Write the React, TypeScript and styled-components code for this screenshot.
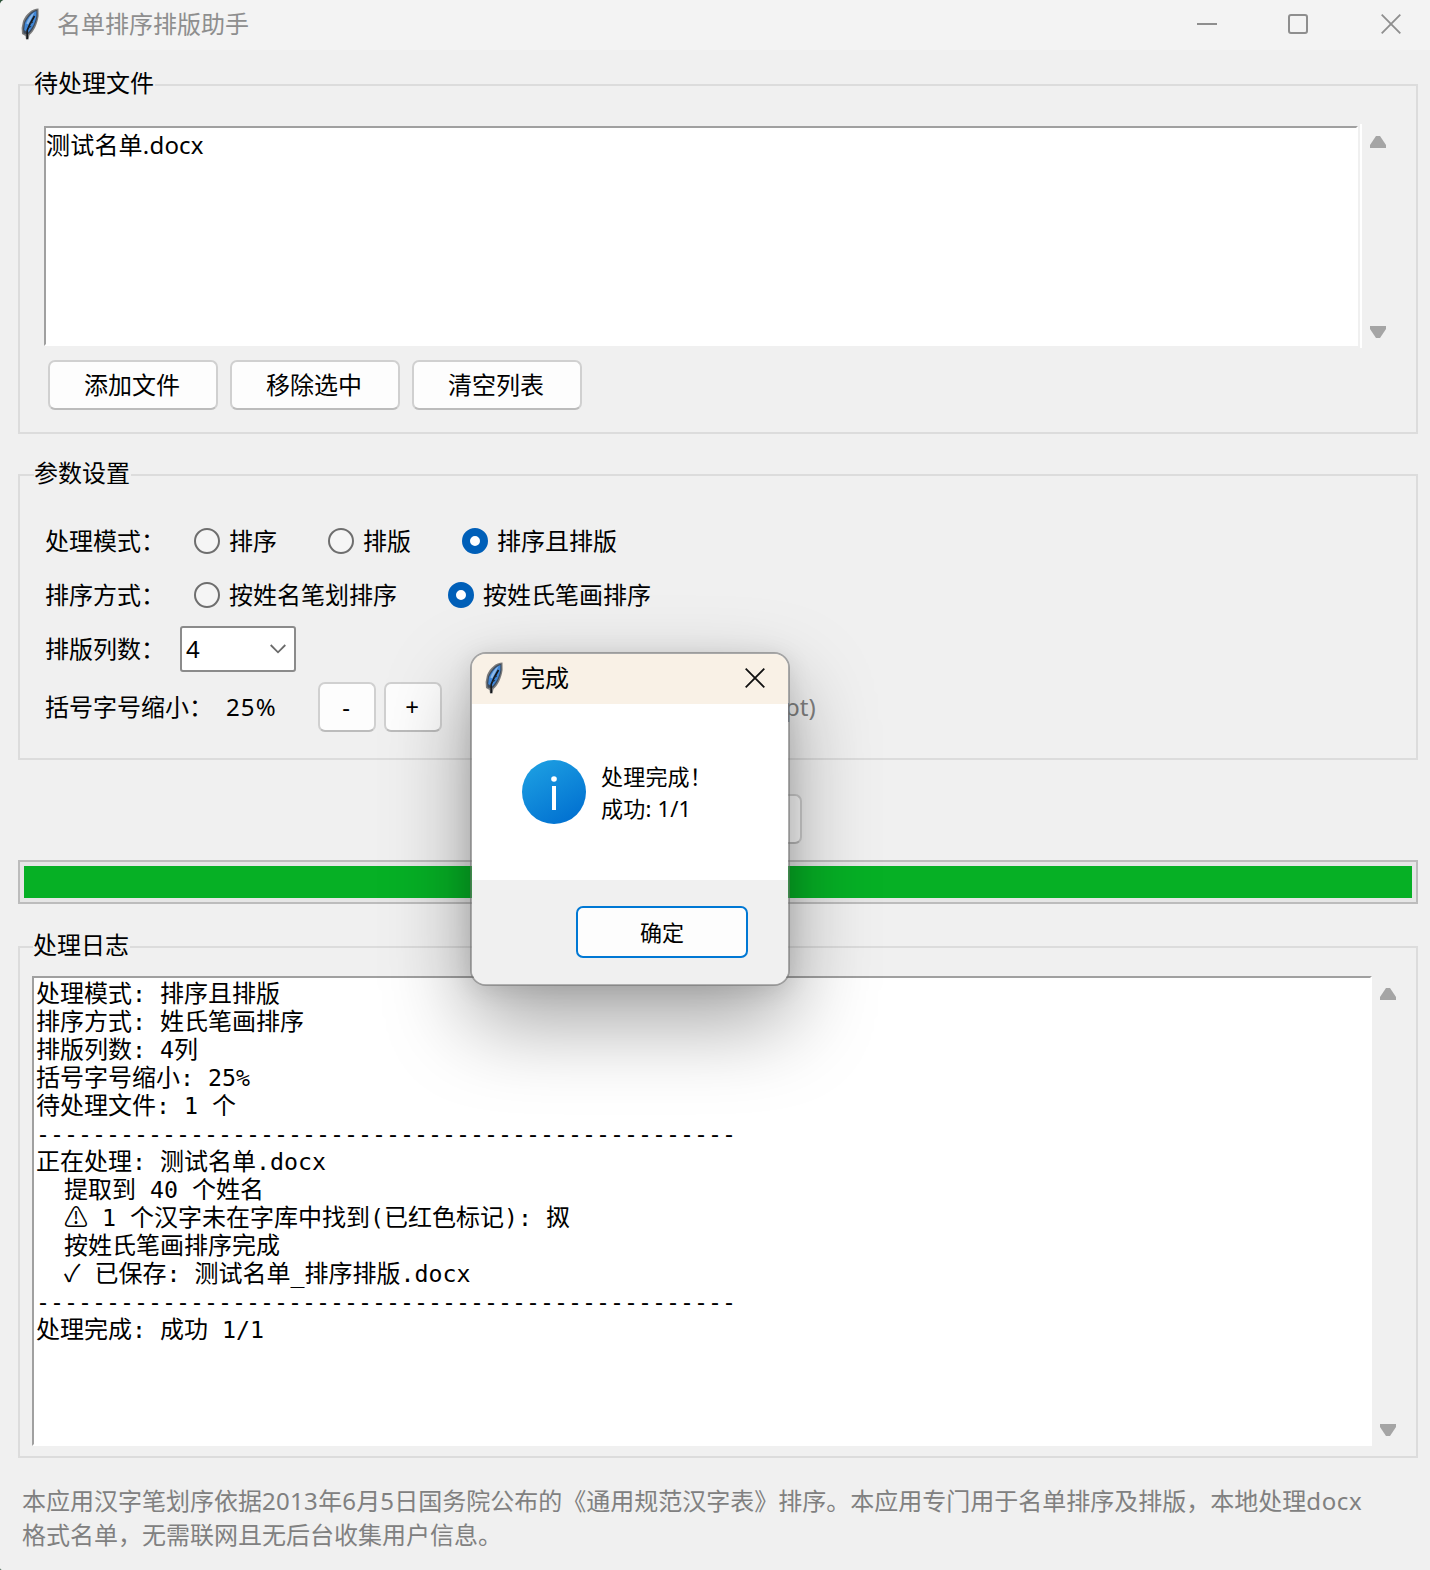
import React from 'react';
import styled, { createGlobalStyle, css } from 'styled-components';

const ui = `"Noto Sans", "Noto Sans CJK SC", sans-serif`;

const GlobalStyle = createGlobalStyle`
  html, body { margin: 0; padding: 0; background: #2c5238; }
  *, *::before, *::after { box-sizing: border-box; }
`;

const Window = styled.div`
  width: 1430px;
  height: 1570px;
  overflow: hidden;
  display: flex;
  flex-direction: column;
  background: #f0f0f0;
  border-radius: 5px 0 0 2px;
  font: 24px/34px ${ui};
  color: #000;
  white-space: nowrap;
  position: relative;
`;

const TitleBar = styled.header`
  height: 50px;
  flex: none;
  display: flex;
  align-items: center;
  padding: 0 29px 2px 20px;
  background: #f3f3f3;
  color: #8e8e8e;
`;

const Title = styled.span`
  margin-left: 17px;
  flex: 1;
`;

const WindowControls = styled.div`
  display: grid;
  grid-template-columns: 91px 93px 20px;
  align-items: center;
`;

const Main = styled.main`
  display: flex;
  flex-direction: column;
  padding: 20px 12px 0 18px;
`;

const Group = styled.fieldset<{ $height: number; $pad: string; $gapBelow?: number }>`
  height: ${(p) => p.$height}px;
  min-width: 0;
  margin: 0 0 ${(p) => p.$gapBelow ?? 0}px;
  border: 2px solid #dcdcdc;
  padding: ${(p) => p.$pad};
`;

const Legend = styled.legend<{ $indent: number }>`
  height: 30px;
  line-height: 26px;
  padding: 0 1px 0 0;
  margin-left: ${(p) => p.$indent}px;
`;

const sunken = css`
  background: #fff;
  border: 2px solid;
  border-color: #a0a0a0 #fff #fff #a0a0a0;
`;

const ListRow = styled.div`
  display: flex;
  height: 224px;
`;

const ListBox = styled.div`
  ${sunken}
  width: 1314px;
  margin: 2px 2px 2px 0;
  letter-spacing: 0.2px;
`;

const ScrollBar = styled.div<{ $edge?: boolean }>`
  width: ${(p) => (p.$edge ? 34 : 32)}px;
  border-left: ${(p) => (p.$edge ? '2px solid #fff' : '0')};
  padding: 12px 0 10px;
  display: flex;
  flex-direction: column;
  justify-content: space-between;
  align-items: center;
`;

const ButtonRow = styled.div`
  display: flex;
  gap: 12px;
  padding: 12px 0 0 4px;
`;

const Button = styled.button<{ $width: number }>`
  width: ${(p) => p.$width}px;
  height: 50px;
  padding: 0 2px 1px 0;
  border: 2px solid #d0d0d0;
  border-bottom-color: #bcbcbc;
  border-radius: 7px;
  background: #fdfdfd;
  color: #000;
  font: inherit;
`;

const Row = styled.div<{ $height?: number }>`
  display: flex;
  align-items: center;
  height: ${(p) => p.$height ?? 54}px;
`;

const RowLabel = styled.span<{ $width: number }>`
  width: ${(p) => p.$width}px;
  flex: none;
`;

const RadioGroup = styled.div`
  display: flex;
  gap: 51px;
`;

const RadioItem = styled.label`
  display: flex;
  align-items: center;
  gap: 9px;
`;

const RadioDot = styled.span<{ $on?: boolean }>`
  width: 26px;
  height: 26px;
  border-radius: 50%;
  border: ${(p) => (p.$on ? '8px solid #005fb8' : '2px solid #6e6e6e')};
  background: ${(p) => (p.$on ? '#fff' : '#f5f5f5')};
`;

const Combo = styled.div`
  width: 116px;
  height: 46px;
  display: flex;
  align-items: center;
  justify-content: space-between;
  padding: 0 8px 0 4px;
  border: 2px solid #8b8b8b;
  border-radius: 3px;
  background: #fff;
`;

const Percent = styled.span`
  width: 92px;
  letter-spacing: 1.1px;
`;

const Stepper = styled.div`
  display: flex;
  gap: 8px;
`;

const Hint = styled.span`
  margin-left: 343px;
  color: #808080;
`;

const StartRow = styled.div`
  display: flex;
  justify-content: center;
  padding: 34px 0 16px;
`;

const Progress = styled.div`
  height: 44px;
  border: 2px solid #bcbcbc;
  background: #e6e6e6;
  padding: 4px;
  margin-bottom: 28px;
`;

const ProgressFill = styled.div`
  height: 100%;
  background: #06b025;
`;

const LogRow = styled.div`
  display: flex;
  height: 470px;
`;

const LogBox = styled.div`
  ${sunken}
  width: 1340px;
  padding: 2px 0 0 2px;
  font-family: "DejaVu Sans Mono", "Noto Sans CJK SC", monospace;
  font-size: 24px;
`;

const LogLine = styled.div`
  height: 28px;
  line-height: 28px;
  white-space: pre;
`;

const Mono = styled.span`
  font-size: 23.26px;
`;

const Symbol = styled.span<{ $width: number }>`
  display: inline-block;
  width: ${(p) => p.$width}px;
  font-family: "Noto Sans CJK SC", "DejaVu Sans", sans-serif;
  line-height: 20px;
`;

const Note = styled.footer`
  margin: 26px 0 0 4px;
  color: #808080;
`;

const Spaced = styled.span<{ $by: number }>`
  letter-spacing: ${(p) => p.$by}px;
`;

const Dialog = styled.section`
  position: absolute;
  left: 470px;
  top: 652px;
  width: 320px;
  height: 334px;
  display: flex;
  flex-direction: column;
  border: 2px solid rgba(110, 110, 110, 0.55);
  background-clip: padding-box;
  border-radius: 16px;
  background-color: #fff;
  overflow: hidden;
  box-shadow: 0 36px 84px rgba(0, 0, 0, 0.36), 0 4px 24px rgba(0, 0, 0, 0.1);
`;

const DialogTitle = styled.div`
  height: 50px;
  display: flex;
  align-items: center;
  padding: 0 23px 3px 12px;
  background: #f9f1e6;
`;

const DialogBody = styled.div`
  height: 176px;
  display: flex;
  align-items: center;
  padding-left: 50px;
  gap: 15px;
  font-size: 22px;
  line-height: 32px;
  letter-spacing: 0.2px;
`;

const DialogFooter = styled.div`
  flex: 1;
  display: flex;
  justify-content: flex-end;
  padding: 26px 40px 0 0;
  background: #f0f0f0;
`;

const OkButton = styled.button`
  width: 172px;
  height: 52px;
  padding: 0 0 1px;
  border: 2px solid #0078d4;
  border-radius: 7px;
  background: #fdfdfd;
  color: #000;
  font: 22px/30px ${ui};
`;

const Feather = () => (
  <svg width="20" height="32" viewBox="0 0 20 32">
    <path d="M18.5 0.5 C12 0.5 6 6 3 13 L1.6 20 L2 26 L5.5 28 L6 31.5 L8.5 31.5 L9.5 27 C14 23.5 17.5 16 18.6 8 Z" fill="#7b7b7b" />
    <path d="M17.3 1.8 C12 2.2 7 8 4 14.5 L3 21 L3.6 25.5 L8 26.2 C13 22.5 16.3 15 17.4 8 Z" fill="#3c4a5c" />
    <path d="M16.4 3 C12 4.4 7.5 9.5 5 15 L4.2 22 L8 24.5 C12.5 20.5 15.4 14 16.4 8 Z" fill="#3f86d6" />
    <path d="M14.5 4.2 C10.6 7 8 11 6.3 15.4 L8.3 16.4 Z" fill="#8db9e8" />
    <path d="M14.5 8 L10 16 L7.2 22.5 L7.2 31" stroke="#15181c" strokeWidth="1.7" fill="none" />
    <path d="M10 15.5 L13 14 M8.4 19.6 L11.2 18.4" stroke="#1d2a3a" strokeWidth="1" />
  </svg>
);

const Cross = ({ color }: { color: string }) => (
  <svg width="20" height="20" viewBox="0 0 20 20">
    <path d="M0.7 0.7 L19.3 19.3 M19.3 0.7 L0.7 19.3" stroke={color} strokeWidth="1.8" />
  </svg>
);

const Arrow = ({ down }: { down?: boolean }) => (
  <svg width="16" height="12" viewBox="0 0 16 12">
    <path
      d={down ? 'M0 0 H16 V3 L10 12 H6 L0 3 Z' : 'M0 12 H16 V9 L10 0 H6 L0 9 Z'}
      fill="#a5a5a5"
    />
  </svg>
);

const Scroll = ({ edge }: { edge?: boolean }) => (
  <ScrollBar $edge={edge}>
    <Arrow />
    <Arrow down />
  </ScrollBar>
);

const Radio = ({ on, text }: { on?: boolean; text: string }) => (
  <RadioItem>
    <RadioDot $on={on} />
    {text}
  </RadioItem>
);

const dashes = '-'.repeat(50);

const logLines = [
  '处理模式: 排序且排版',
  '排序方式: 姓氏笔画排序',
  '排版列数: 4列',
  '括号字号缩小: 25%',
  '待处理文件: 1 个',
  dashes,
  '正在处理: 测试名单.docx',
  '  提取到 40 个姓名',
  '  ⚠ 1 个汉字未在字库中找到(已红色标记): 㧐',
  '  按姓氏笔画排序完成',
  '  ✓ 已保存: 测试名单_排序排版.docx',
  dashes,
  '处理完成: 成功 1/1',
];

const symbolWidths: Record<string, number> = { '⚠': 24, '✓': 16.5 };

const renderLog = (line: string) =>
  line.split(/([\x20-\x7e]+|⚠|✓)/).map((part, i) => {
    if (symbolWidths[part]) {
      return <Symbol key={i} $width={symbolWidths[part]}>{part}</Symbol>;
    }
    return i % 2 ? <Mono key={i}>{part}</Mono> : part;
  });

export default function App() {
  return (
    <Window>
      <GlobalStyle />
      <TitleBar>
        <Feather />
        <Title>名单排序排版助手</Title>
        <WindowControls>
          <svg width="20" height="20" viewBox="0 0 20 20">
            <path d="M0 10 H20" stroke="#8e8e8e" strokeWidth="2" />
          </svg>
          <svg width="20" height="20" viewBox="0 0 20 20">
            <rect x="1" y="1" width="18" height="18" rx="2" fill="none" stroke="#8e8e8e" strokeWidth="2" />
          </svg>
          <Cross color="#8e8e8e" />
        </WindowControls>
      </TitleBar>
      <Main>
        <Group $height={364} $pad="24px 22px 0 24px" $gapBelow={26}>
          <Legend $indent={-10}>待处理文件</Legend>
          <ListRow>
            <ListBox>测试名单.docx</ListBox>
            <Scroll edge />
          </ListRow>
          <ButtonRow>
            <Button $width={170}>添加文件</Button>
            <Button $width={170}>移除选中</Button>
            <Button $width={170}>清空列表</Button>
          </ButtonRow>
        </Group>
        <Group $height={300} $pad="24px 0 0 25px">
          <Legend $indent={-11}>参数设置</Legend>
          <Row>
            <RowLabel $width={149}>处理模式：</RowLabel>
            <RadioGroup>
              <Radio text="排序" />
              <Radio text="排版" />
              <Radio on text="排序且排版" />
            </RadioGroup>
          </Row>
          <Row>
            <RowLabel $width={149}>排序方式：</RowLabel>
            <RadioGroup>
              <Radio text="按姓名笔划排序" />
              <Radio on text="按姓氏笔画排序" />
            </RadioGroup>
          </Row>
          <Row>
            <RowLabel $width={135}>排版列数：</RowLabel>
            <Combo>
              4
              <svg width="16" height="10" viewBox="0 0 16 10">
                <path d="M0.7 1 L8 8.3 L15.3 1" fill="none" stroke="#6a6a6a" strokeWidth="1.8" />
              </svg>
            </Combo>
          </Row>
          <Row $height={62}>
            <RowLabel $width={181}>括号字号缩小：</RowLabel>
            <Percent>25%</Percent>
            <Stepper>
              <Button $width={58}>-</Button>
              <Button $width={58}>+</Button>
            </Stepper>
            <Hint>pt)</Hint>
          </Row>
        </Group>
        <StartRow>
          <Button $width={168} />
        </StartRow>
        <Progress>
          <ProgressFill />
        </Progress>
        <Group $height={526} $pad="14px 0 0 12px">
          <Legend $indent={1}>处理日志</Legend>
          <LogRow>
            <LogBox>
              {logLines.map((line, i) => (
                <LogLine key={i}>{renderLog(line)}</LogLine>
              ))}
            </LogBox>
            <Scroll />
          </LogRow>
        </Group>
        <Note>
          本应用汉字笔划序依据<Spaced $by={0.3}>2013</Spaced>年<Spaced $by={0.3}>6</Spaced>月
          <Spaced $by={0.3}>5</Spaced>
          日国务院公布的《通用规范汉字表》排序。本应用专门用于名单排序及排版，本地处理
          <Spaced $by={0.7}>docx</Spaced>
          <br />
          格式名单，无需联网且无后台收集用户信息。
        </Note>
      </Main>
      <Dialog>
        <DialogTitle>
          <Feather />
          <Title>完成</Title>
          <Cross color="#111" />
        </DialogTitle>
        <DialogBody>
          <svg width="64" height="64" viewBox="0 0 64 64">
            <defs>
              <linearGradient id="info" x1="0.2" y1="0" x2="0.8" y2="1">
                <stop offset="0" stopColor="#1d9fe2" />
                <stop offset="1" stopColor="#006fd0" />
              </linearGradient>
            </defs>
            <circle cx="32" cy="32" r="32" fill="url(#info)" />
            <circle cx="32" cy="19" r="2.8" fill="#fff" />
            <rect x="30" y="26" width="4" height="24" fill="#fff" />
          </svg>
          <div>
            处理完成！
            <br />
            成功: 1/1
          </div>
        </DialogBody>
        <DialogFooter>
          <OkButton>确定</OkButton>
        </DialogFooter>
      </Dialog>
    </Window>
  );
}
